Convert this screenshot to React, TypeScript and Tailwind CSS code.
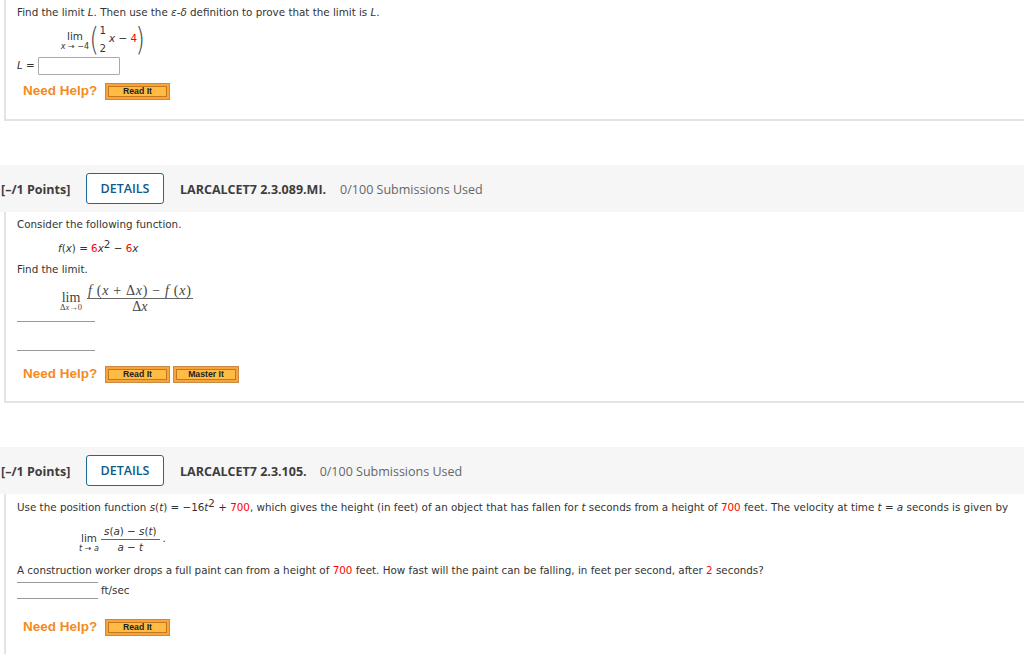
import React from 'react'

const verdana = "font-['DejaVu_Sans',sans-serif]"

function Red({ children }: { children: React.ReactNode }) {
  return <span className="text-[#f00]">{children}</span>
}

function Var({ children }: { children: React.ReactNode }) {
  return <i>{children}</i>
}

function HelpButton({ label, width }: { label: string; width: string }) {
  return (
    <div className={`${width} h-[17px] p-[2px] bg-[#f9a33c] border border-[#c98a45] flex`}>
      <div className="flex-1 bg-[#ffbb44] border border-[#c47a1c] flex items-center justify-center font-['Liberation_Sans',sans-serif] font-bold text-[8.7px] text-[#222] leading-none">
        {label}
      </div>
    </div>
  )
}

function NeedHelp({ buttons }: { buttons: { label: string; width: string }[] }) {
  return (
    <div className="flex items-center pl-[6px] h-[18px]">
      <span className="w-[82px] font-['Liberation_Sans',sans-serif] font-bold text-[13.5px] text-[#f58a1f] leading-none whitespace-nowrap">
        Need Help?
      </span>
      <div className="flex gap-[3px]">
        {buttons.map(b => (
          <HelpButton key={b.label} label={b.label} width={b.width} />
        ))}
      </div>
    </div>
  )
}

function QuestionHeader({ code, gap }: { code: string; gap: string }) {
  return (
    <div className="h-[47px] bg-[#f6f6f6] flex items-center pl-[1px] font-['Open_Sans',sans-serif] text-[12.5px] whitespace-nowrap">
      <span className="w-[85px] pt-[3px] font-bold text-[#3d3d3d]">[–/1 Points]</span>
      <div className="w-[78px] h-[31px] pt-[2px] rounded-[3px] border border-[#1a6a9a] bg-white flex items-center justify-center font-semibold text-[#0e5a8a]">
        DETAILS
      </div>
      <span className={`ml-[16px] pt-[3px] font-bold text-[#3d3d3d] ${gap}`}>{code}</span>
      <span className="pt-[3px] text-[#666]">0/100 Submissions Used</span>
    </div>
  )
}

export default function App() {
  return (
    <div className={`w-[1024px] h-[654px] overflow-hidden bg-white ${verdana} text-[10.35px] text-[#333]`}>
      {/* First question, cut off at the top */}
      <div className="ml-[4px] h-[121px] border-l-2 border-b-2 border-[#e4e4e4] pl-[11px] pt-[5px]">
        <p className="h-[14px] leading-[14px]">
          Find the limit <Var>L</Var>. Then use the <Var>ε</Var>-<Var>δ</Var> definition to prove that the limit is <Var>L</Var>.
        </p>
        <div className="h-[36px] mt-[2px] ml-[41px] flex items-center">
          <div className="w-[34px] flex flex-col items-center pt-[4px]">
            <span className="leading-[12px]">lim</span>
            <span className="text-[8px] leading-[10px] whitespace-nowrap"><Var>x</Var> → −4</span>
          </div>
          <span className="text-[32px] font-extralight leading-none text-[#444] scale-x-75 ml-[-4px]">(</span>
          <div className="flex flex-col items-center leading-[14px] ml-[-1px]">
            <span>1</span>
            <span className="h-[4px]" />
            <span>2</span>
          </div>
          <span className="ml-[3px]"><Var>x</Var> − <Red>4</Red></span>
          <span className="text-[32px] font-extralight leading-none text-[#444] scale-x-75 ml-[-3px]">)</span>
        </div>
        <div className="flex items-center h-[19px] mt-[-1px]">
          <span className="w-[21px]"><Var>L</Var> =</span>
          <div className="w-[82px] h-[18px] border border-[#aaa] rounded-[1px]" />
        </div>
        <div className="mt-[7px]">
          <NeedHelp buttons={[{ label: 'Read It', width: 'w-[65px]' }]} />
        </div>
      </div>

      <div className="h-[44px]" />

      <QuestionHeader code="LARCALCET7 2.3.089.MI." gap="mr-[14px]" />
      <div className="ml-[4px] h-[191px] border-l-2 border-b-2 border-[#e4e4e4] pl-[11px] pt-[5px]">
        <p className="h-[14px] leading-[14px]">Consider the following function.</p>
        <p className="h-[14px] leading-[14px] ml-[41px] mt-[10px]">
          <Var>f</Var>(<Var>x</Var>) = <Red>6</Red><Var>x</Var><sup className="text-[10.35px] leading-none top-[-4px]">2</sup> − <Red>6</Red><Var>x</Var>
        </p>
        <p className="h-[14px] leading-[14px] mt-[7px]">Find the limit.</p>
        <div className="h-[36px] mt-[5px] ml-[39px] flex items-center font-['Liberation_Serif',serif] text-[#444]">
          <div className="w-[30px] flex flex-col items-center pt-[5px]">
            <span className="text-[14px] leading-[11px]">lim</span>
            <span className="text-[8.5px] leading-[9px] whitespace-nowrap">Δ<Var>x</Var>→0</span>
          </div>
          <div className="ml-[1px] mb-[2px] flex flex-col items-center text-[14px] leading-[15px] whitespace-nowrap">
            <span className="px-[1px] tracking-[0.7px] border-b border-[#666]"><Var>f</Var> (<Var>x</Var> + Δ<Var>x</Var>) − <Var>f</Var> (<Var>x</Var>)</span>
            <span>Δ<Var>x</Var></span>
          </div>
        </div>
        <div className="w-[78px] h-[30px] mt-[4px] border-t border-b border-[#999]" />
        <div className="mt-[14px]">
          <NeedHelp buttons={[{ label: 'Read It', width: 'w-[65px]' }, { label: 'Master It', width: 'w-[66px]' }]} />
        </div>
      </div>

      <div className="h-[44px]" />

      <QuestionHeader code="LARCALCET7 2.3.105." gap="mr-[13px]" />
      <div className="ml-[4px] h-[160px] border-l-2 border-[#e4e4e4] pl-[11px] pt-[6px]">
        <p className="h-[14px] leading-[14px] whitespace-nowrap">
          Use the position function <Var>s</Var>(<Var>t</Var>) = −16<Var>t</Var><sup className="text-[10.35px] leading-none top-[-4px]">2</sup> + <Red>700</Red>, which gives the height (in feet) of an object that has fallen for <Var>t</Var> seconds from a height of <Red>700</Red> feet. The velocity at time <Var>t</Var> = <Var>a</Var> seconds is given by
        </p>
        <div className="h-[30px] mt-[10px] ml-[62px] flex items-center">
          <div className="w-[20px] flex flex-col items-center pt-[7px]">
            <span className="leading-[11px]">lim</span>
            <span className="text-[8px] leading-[9px] whitespace-nowrap"><Var>t</Var> → <Var>a</Var></span>
          </div>
          <div className="ml-[2px] flex flex-col items-center leading-[15px] whitespace-nowrap">
            <span className="px-[3px] border-b border-[#666]"><Var>s</Var>(<Var>a</Var>) − <Var>s</Var>(<Var>t</Var>)</span>
            <span><Var>a</Var> − <Var>t</Var></span>
          </div>
          <span className="ml-[3px]">.</span>
        </div>
        <p className="h-[14px] leading-[14px] mt-[9px]">
          A construction worker drops a full paint can from a height of <Red>700</Red> feet. How fast will the paint can be falling, in feet per second, after <Red>2</Red> seconds?
        </p>
        <div className="flex items-center mt-[5px]">
          <div className="w-[81px] h-[17px] border-t border-b border-[#999]" />
          <span className="ml-[3px]">ft/sec</span>
        </div>
        <div className="mt-[19px]">
          <NeedHelp buttons={[{ label: 'Read It', width: 'w-[65px]' }]} />
        </div>
      </div>
    </div>
  )
}
